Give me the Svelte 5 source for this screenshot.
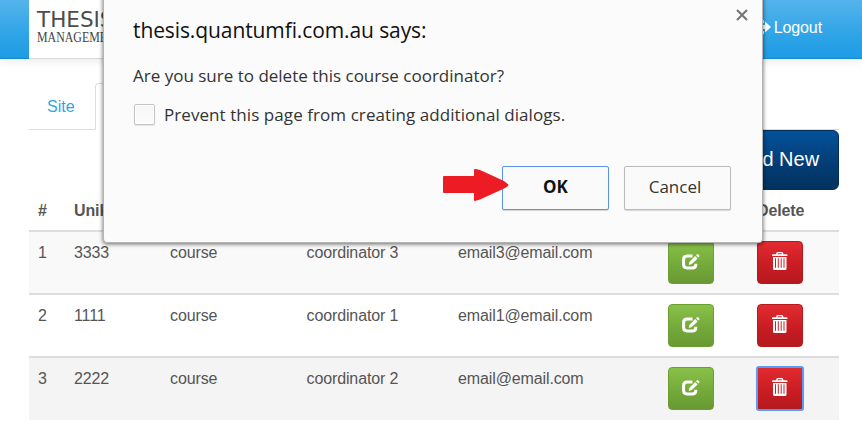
<script>
  const rows = [
    { n: 1, id: '3333', first: 'course', last: 'coordinator 3', email: 'email3@email.com' },
    { n: 2, id: '1111', first: 'course', last: 'coordinator 1', email: 'email1@email.com' },
    { n: 3, id: '2222', first: 'course', last: 'coordinator 2', email: 'email@email.com', focused: true }
  ];
</script>

<div class="page">
  <header>
    <div class="brand">
      <span class="b1">THESIS</span>
      <span class="b2">MANAGEMENT</span>
    </div>
    <a class="logout">
      <svg width="17" height="16" viewBox="0 0 17 16"><path d="M1 1h9v3H4v8h6v3H1zM6 6h5V2.500L17 8 11 13.500V10H6z" fill="#fff" /></svg>
      Logout
    </a>
  </header>

  <main>
    <nav><a class="tab">Site</a><a class="tab active">Course</a></nav>
    <div class="actions"><button class="add">Add New</button></div>
    <div class="table">
      <div class="row head">
        <span>#</span><span>Unikey</span><span></span><span></span><span></span><span></span><span>Delete</span>
      </div>
      {#each rows as r}
        <div class="row" class:odd={r.n === 1} class:hover={r.n === 3}>
          <span>{r.n}</span><span>{r.id}</span><span>{r.first}</span><span>{r.last}</span><span>{r.email}</span>
          <button class="btn edit" aria-label="Edit">
            <svg width="18" height="16" viewBox="0 0 18 16">
              <path d="M10.500 2H5.200Q1.600 2 1.600 5.400V10.600Q1.600 14 5.200 14H10.200Q13.800 14 13.800 10.800V9.800" fill="none" stroke="#fff" stroke-width="3" />
              <path d="M6.700 10.900L7.500 7.700 13.200 2 15.600 4.400 9.900 10.100zM14 1.300L15.100 .2Q15.600-.2 16.100 .2L17.300 1.400Q17.700 1.900 17.300 2.400L16.300 3.500z" fill="#fff" />
            </svg>
          </button>
          <button class="btn del" class:focused={r.focused} aria-label="Delete">
            <svg width="16" height="18" viewBox="0 0 16 18">
              <path d="M4.200 2.200V1.500Q4.200 0 5.700 0H9.800Q11.300 0 11.300 1.500V2.200H14.500Q15.500 2.200 15.500 3.200V4H0V3.200Q0 2.200 1 2.200zM5.700 2.200H9.800V1.300H5.700z" fill="#fff" fill-rule="evenodd" />
              <path d="M1 5H14.500V16.400Q14.500 18 13 18H2.500Q1 18 1 16.400zM3 6.200V15.800H4V6.200zM5.800 6.200V15.800H6.800V6.200zM8.700 6.200V15.800H9.700V6.200zM11.500 6.200V15.800H12.500V6.200z" fill="#fff" fill-rule="evenodd" />
            </svg>
          </button>
        </div>
      {/each}
    </div>
  </main>

  <div class="dialog">
    <svg class="close" width="12" height="12" viewBox="0 0 12 12"><path d="M1 1L11 11M11 1L1 11" stroke="#757575" stroke-width="2.100" /></svg>
    <h1>thesis.quantumfi.com.au says:</h1>
    <p class="msg">Are you sure to delete this course coordinator?</p>
    <label><i class="box"></i><span>Prevent this page from creating additional dialogs.</span></label>
    <div class="buttons">
      <button class="ok">OK</button>
      <button class="cancel">Cancel</button>
    </div>
    <svg class="arrow" width="66" height="34" viewBox="0 0 66 34"><path d="M1 8H31V2Q31 .5 33 1L37 2 60 12.500Q65.500 16 65.500 17 65.500 18 60 21L37 31.500 32 33Q31 33 31 32V25H1Q0 25 0 24V9Q0 8 1 8z" fill="#ed1c24" /></svg>
  </div>
</div>

<style>
  :global(body) { background: #fff; }
  .page {
    position: relative;
    width: 862px;
    height: 431px;
    overflow: hidden;
    font: 16px/23px "Liberation Sans", Arial, sans-serif;
    color: #555;
  }
  button { font: inherit; padding: 0; box-sizing: border-box; }
  header {
    box-sizing: border-box;
    height: 59px;
    padding: 0 40px 0 29px;
    display: flex;
    justify-content: space-between;
    background: linear-gradient(#54b4eb, #2fa4e7 60%, #1d9ce5);
    border-bottom: 1px solid #178acc;
    box-shadow: 0 1px 10px rgba(0, 0, 0, 0.1);
  }
  .brand {
    width: 160px;
    height: 59px;
    background: #fff;
    border-bottom: 1px solid #d5d9dc;
    padding: 8px 0 0 8px;
    box-sizing: border-box;
    display: flex;
    flex-direction: column;
    align-items: flex-start;
  }
  .b1 { font: 21.500px/24px "DejaVu Sans", sans-serif; color: #4c4c4c; }
  .b2 { font: 14px/12px "Liberation Serif", serif; color: #444; transform: scaleX(0.85); transform-origin: left; }
  .logout { color: #fff; display: flex; gap: 3px; align-items: center; height: 54px; letter-spacing: -0.1px; }
  main { padding: 24px 23px 0 29px; }
  nav { display: flex; height: 47px; box-sizing: border-box; border-bottom: 1px solid #ddd; }
  .tab { box-sizing: border-box; width: 66px; padding: 12px 0 0 18px; color: #2fa4e7; height: 47px; }
  .active { width: 90px; border: 1px solid #ddd; border-bottom-color: #fff; border-radius: 4px 4px 0 0; color: #555; background: #fff; }
  .actions { display: flex; justify-content: flex-end; }
  .add {
    width: 130px;
    height: 60px;
    padding: 0 0 2px 9px;
    border: 1px solid #022f5a;
    border-radius: 6px;
    background: linear-gradient(#04519b, #033c73 60%, #02325f);
    color: #fff;
    font-size: 20px;
  }
  .row {
    display: grid;
    grid-template-columns: 36px 96px 136.500px 151.500px 210px 89px 82px;
    box-sizing: border-box;
    width: 810px;
    height: 63px;
    padding: 9px 0 0 9px;
    border-top: 2px solid #ddd;
    letter-spacing: -0.12px;
  }
  .head { height: 40px; border-top: 0; font-weight: bold; }
  .odd { background: #f9f9f9; }
  .hover { height: 64px; background: #f4f4f4; }
  .btn {
    width: 46px;
    height: 43px;
    border: 1px solid;
    border-radius: 4px;
    display: flex;
    align-items: center;
    justify-content: center;
  }
  .edit { border-color: #6ba031; background: linear-gradient(#88c149, #73a839 60%, #699934); }
  .del { border-color: #b8191e; background: linear-gradient(#e12b31, #c71c22 60%, #b5191f); }
  .del svg { margin: -3px 0 0; }
  .edit svg { margin-top: -1px; }
  .focused { border-color: #911419; border-radius: 2px; outline: 2px solid #5b9bf8; outline-offset: -1px; }

  .dialog {
    position: absolute;
    left: 103px;
    top: -8px;
    width: 660px;
    height: 251px;
    box-sizing: border-box;
    padding: 0 31px 0 29px;
    background: #fbfbfb;
    border: 1px solid #b4b4b4;
    border-radius: 4px;
    box-shadow: 0 1px 4px rgba(0, 0, 0, 0.6);
    font-family: "Open Sans", "Noto Sans", sans-serif;
    color: #333;
  }
  h1 { margin: 21px 0 0; font-size: 21px; line-height: 32px; font-weight: 400; color: #111; letter-spacing: -0.1px; white-space: nowrap; }
  .msg { margin: 18px 0 0; font-size: 17px; line-height: 24px; white-space: nowrap; }
  label { display: flex; align-items: center; gap: 9px; margin-top: 14px; height: 24px; font-size: 17px; letter-spacing: 0.07px; white-space: nowrap; }
  .box { box-sizing: border-box; margin-left: 1px; width: 21px; height: 21px; border: 1px solid #c4c4c4; border-radius: 2px; background: linear-gradient(#f6f6f6, #fcfcfc); box-shadow: inset 0 0 0 1px #fff, 0 1px 1px rgba(0, 0, 0, 0.1); }
  .buttons { display: flex; justify-content: flex-end; gap: 15px; margin-top: 40px; }
  .buttons button { width: 107px; height: 44px; padding-bottom: 3px; border: 1px solid #bbb; border-radius: 2px; background: #fafafa; font-size: 17px; color: #333; box-shadow: 0 1px 1px rgba(0, 0, 0, 0.15); }
  .buttons .cancel { padding-right: 5px; }
  .buttons .ok { border-color: #5b92ee; font-weight: 700; color: #111; }
  .close { position: absolute; right: 14px; top: 16px; }
  .arrow { position: absolute; left: 339px; top: 175px; }
</style>
